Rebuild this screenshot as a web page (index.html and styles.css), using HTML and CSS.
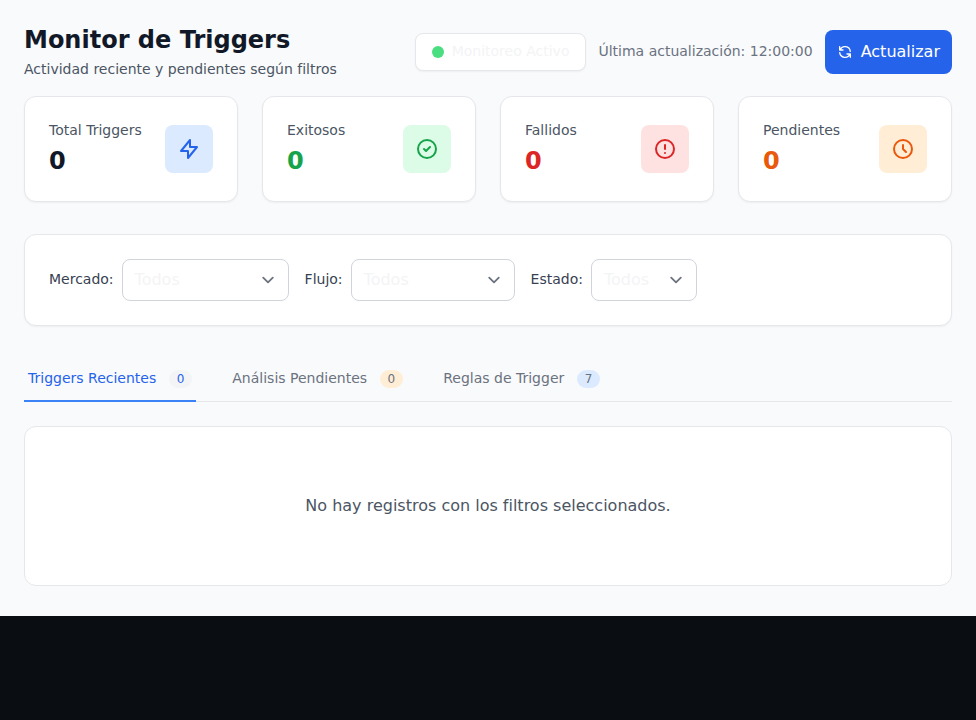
FILE: index.html
```html
<!DOCTYPE html>
<html lang="es">
<head>
<meta charset="utf-8">
<title>Monitor de Triggers</title>
<link rel="stylesheet" href="styles.css">
</head>
<body>
<main class="page">
  <header class="header">
    <div>
      <h1 class="title">Monitor de Triggers</h1>
      <p class="subtitle small">Actividad reciente y pendientes según filtros</p>
    </div>
    <div class="actions">
      <div class="status"><span class="dot"></span><span class="small">Monitoreo Activo</span></div>
      <span class="updated small">Última actualización: 12:00:00</span>
      <button class="refresh" type="button">
        <svg class="icon icon-sm" viewBox="0 0 24 24"><path d="M4 4v5h.582m15.356 2A8.001 8.001 0 004.582 9m0 0H9m11 11v-5h-.581m0 0a8.003 8.003 0 01-15.357-2m15.357 2H15"/></svg>
        <span>Actualizar</span>
      </button>
    </div>
  </header>

  <section class="stats">
    <div class="card stat">
      <div><p class="stat-label small">Total Triggers</p><p class="stat-value">0</p></div>
      <div class="tile blue"><svg class="icon" viewBox="0 0 24 24"><path d="M13 10V3L4 14h7v7l9-11h-7z"/></svg></div>
    </div>
    <div class="card stat">
      <div><p class="stat-label small">Exitosos</p><p class="stat-value value-green">0</p></div>
      <div class="tile green"><svg class="icon" viewBox="0 0 24 24"><path d="M9 12l2 2 4-4m6 2a9 9 0 11-18 0 9 9 0 0118 0z"/></svg></div>
    </div>
    <div class="card stat">
      <div><p class="stat-label small">Fallidos</p><p class="stat-value value-red">0</p></div>
      <div class="tile red"><svg class="icon" viewBox="0 0 24 24"><path d="M12 8v4m0 4h.01M21 12a9 9 0 11-18 0 9 9 0 0118 0z"/></svg></div>
    </div>
    <div class="card stat">
      <div><p class="stat-label small">Pendientes</p><p class="stat-value value-orange">0</p></div>
      <div class="tile orange"><svg class="icon" viewBox="0 0 24 24"><path d="M12 8v4l3 3m6-3a9 9 0 11-18 0 9 9 0 0118 0z"/></svg></div>
    </div>
  </section>

  <section class="card filters">
    <div class="field">
      <span class="field-label small">Mercado:</span>
      <div class="select market"><span>Todos</span><svg class="chevron" viewBox="0 0 20 20"><path d="M6 8l4 4 4-4"/></svg></div>
    </div>
    <div class="field">
      <span class="field-label small">Flujo:</span>
      <div class="select flow"><span>Todos</span><svg class="chevron" viewBox="0 0 20 20"><path d="M6 8l4 4 4-4"/></svg></div>
    </div>
    <div class="field">
      <span class="field-label small">Estado:</span>
      <div class="select state"><span>Todos</span><svg class="chevron" viewBox="0 0 20 20"><path d="M6 8l4 4 4-4"/></svg></div>
    </div>
  </section>

  <nav class="tabs">
    <button class="tab active" type="button"><span class="small">Triggers Recientes</span><span class="pill">0</span></button>
    <button class="tab" type="button"><span class="small">Análisis Pendientes</span><span class="pill pill-orange">0</span></button>
    <button class="tab" type="button"><span class="small">Reglas de Trigger</span><span class="pill pill-blue">7</span></button>
  </nav>

  <section class="empty">No hay registros con los filtros seleccionados.</section>
</main>
</body>
</html>
```
FILE: styles.css
```css
* { box-sizing: border-box; }

body {
  margin: 0;
  background: #0a0d12;
  font-family: "DejaVu Sans", sans-serif;
  font-size: 16px;
  line-height: 24px;
  color: #f3f4f6;
}

h1, p { margin: 0; }

button {
  font: inherit;
  border: 0;
  background: none;
}

.page {
  height: 616px;
  padding: 24px;
  background: #f9fafc;
}

.small {
  display: block;
  padding-bottom: 2px;
  font-size: 14px;
  line-height: 18px;
}

.header {
  display: flex;
  justify-content: space-between;
  align-items: center;
  height: 56px;
  margin-bottom: 16px;
}

.title {
  font-size: 24px;
  line-height: 32px;
  font-weight: 700;
  color: #111827;
}

.subtitle {
  margin-top: 4px;
  color: #4b5563;
}

.actions {
  display: flex;
  align-items: center;
  gap: 12px;
}

.status {
  display: flex;
  align-items: center;
  gap: 8px;
  height: 38px;
  padding: 0 16px;
  border: 1px solid #e5e7eb;
  border-radius: 8px;
  background: #fff;
  box-shadow: 0 1px 2px rgba(0, 0, 0, 0.05);
}

.dot {
  width: 12px;
  height: 12px;
  border-radius: 50%;
  background: #4ade80;
}

.updated { color: #6b7280; }

.refresh {
  display: flex;
  align-items: center;
  gap: 8px;
  height: 44px;
  padding: 0 12px;
  border-radius: 8px;
  background: #2563eb;
  color: #fff;
}

.icon {
  width: 24px;
  height: 24px;
  fill: none;
  stroke: currentColor;
  stroke-width: 2;
  stroke-linecap: round;
  stroke-linejoin: round;
}

.icon-sm {
  width: 16px;
  height: 16px;
}

.card {
  border: 1px solid #e5e7eb;
  border-radius: 12px;
  background: #fff;
  box-shadow: 0 1px 2px rgba(0, 0, 0, 0.05);
  padding: 24px;
}

.stats {
  display: grid;
  grid-template-columns: repeat(4, 1fr);
  gap: 24px;
  margin-bottom: 32px;
}

.stat {
  display: flex;
  align-items: center;
  justify-content: space-between;
}

.stat-label { color: #4b5563; }

.stat-value {
  margin-top: 4px;
  font-size: 24px;
  line-height: 32px;
  font-weight: 700;
  color: #111827;
}

.value-green { color: #16a34a; }
.value-red { color: #dc2626; }
.value-orange { color: #ea580c; }

.tile {
  display: flex;
  align-items: center;
  justify-content: center;
  width: 48px;
  height: 48px;
  border-radius: 8px;
}

.blue { background: #dbeafe; color: #2563eb; }
.green { background: #dcfce7; color: #16a34a; }
.red { background: #fee2e2; color: #dc2626; }
.orange { background: #ffedd5; color: #ea580c; }

.filters {
  display: flex;
  gap: 16px;
  margin-bottom: 32px;
}

.field {
  display: flex;
  align-items: center;
  gap: 8px;
}

.field-label { color: #374151; }

.select {
  display: flex;
  align-items: center;
  justify-content: space-between;
  height: 42px;
  padding: 0 8px 0 12px;
  border: 1px solid #d1d5db;
  border-radius: 8px;
  background: #fff;
}

.market { width: 167px; }
.flow { width: 164px; }
.state { width: 106px; }

.chevron {
  width: 24px;
  height: 24px;
  fill: none;
  stroke: #6b7280;
  stroke-width: 1.5;
  stroke-linecap: round;
  stroke-linejoin: round;
}

.tabs {
  display: flex;
  gap: 32px;
  height: 44px;
  margin-bottom: 24px;
  box-shadow: inset 0 -1px #e5e7eb;
}

.tab {
  display: flex;
  align-items: center;
  gap: 12.45px;
  padding: 0 4px;
  border-bottom: 2px solid transparent;
  color: #6b7280;
}

.active {
  border-bottom-color: #3b82f6;
  color: #2563eb;
}

.pill {
  padding: 1px 8px;
  border-radius: 9px;
  background: #f3f4f6;
  font-size: 12px;
  line-height: 16px;
}

.pill-orange { background: #ffedd5; }
.pill-blue { background: #dbeafe; }

.empty {
  display: flex;
  align-items: center;
  justify-content: center;
  height: 160px;
  border: 1px solid #e5e7eb;
  border-radius: 12px;
  background: #fff;
  color: #4b5563;
}
```
